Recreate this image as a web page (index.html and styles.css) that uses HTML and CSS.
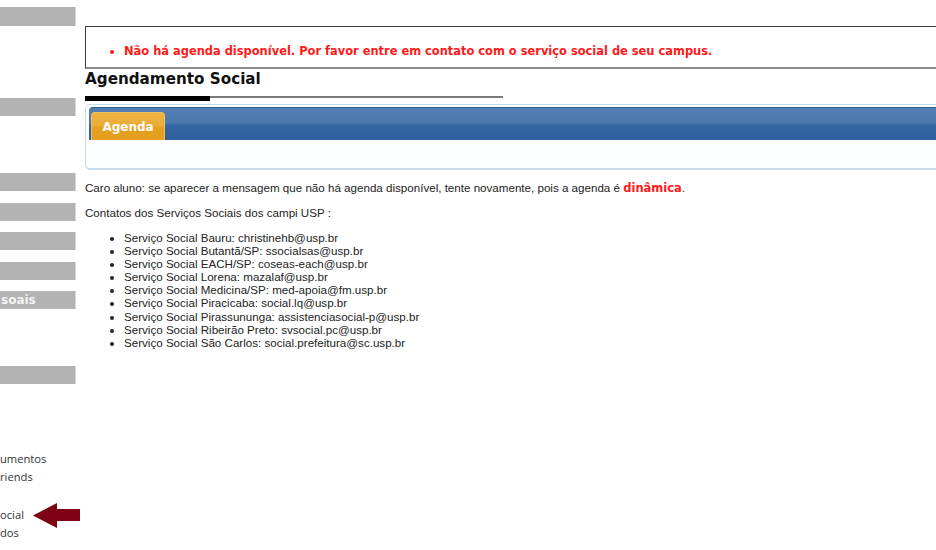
FILE: index.html
```html
<!DOCTYPE html>
<html lang="pt-BR">
<head>
<meta charset="utf-8">
<title>Agendamento Social</title>
<link rel="stylesheet" href="styles.css">
</head>
<body>
<div class="page">
  <aside class="sidebar">
    <div class="bar b1"></div>
    <div class="bar b2"></div>
    <div class="bar b3"></div>
    <div class="bar b4"></div>
    <div class="bar b5"></div>
    <div class="bar b6"></div>
    <div class="bar b7"><span class="bar-label">soais</span></div>
    <div class="bar b8"></div>
    <div class="links">
      <div class="link">umentos</div>
      <div class="link">riends</div>
      <div class="link l3">ocial</div>
      <div class="link">dos</div>
    </div>
  </aside>
  <main class="main">
    <div class="alert">
      <ul>
        <li>Não há agenda disponível. Por favor entre em contato com o serviço social de seu campus.</li>
      </ul>
    </div>
    <h1 class="title">Agendamento Social</h1>
    <div class="title-rule"><span class="title-rule-mark"></span></div>
    <div class="tabs">
      <div class="tabbar"><span class="tab">Agenda</span></div>
      <div class="tabbody"></div>
    </div>
    <p class="text">Caro aluno: se aparecer a mensagem que não há agenda disponível, tente novamente, pois a agenda é <span class="hot">dinâmica</span>.</p>
    <p class="text">Contatos dos Serviços Sociais dos campi USP :</p>
    <ul class="contacts">
      <li>Serviço Social Bauru: christinehb@usp.br</li>
      <li>Serviço Social Butantã/SP: ssocialsas@usp.br</li>
      <li>Serviço Social EACH/SP: coseas-each@usp.br</li>
      <li>Serviço Social Lorena: mazalaf@usp.br</li>
      <li>Serviço Social Medicina/SP: med-apoia@fm.usp.br</li>
      <li>Serviço Social Piracicaba: social.lq@usp.br</li>
      <li>Serviço Social Pirassununga: assistenciasocial-p@usp.br</li>
      <li>Serviço Social Ribeirão Preto: svsocial.pc@usp.br</li>
      <li>Serviço Social São Carlos: social.prefeitura@sc.usp.br</li>
    </ul>
  </main>
  <svg class="arrow" width="48" height="25" viewBox="0 0 48 25" aria-hidden="true">
    <polygon points="0,12.5 24,0 24,6 47,6 47,18 24,18 24,25" fill="#7d0014"/>
  </svg>
</div>
</body>
</html>
```
FILE: styles.css
```css
html, body {
  margin: 0;
  padding: 0;
  background: #ffffff;
  overflow: hidden;
}

.page {
  position: relative;
  display: flex;
  gap: 9px;
  width: 936px;
  height: 550px;
  overflow: hidden;
}

/* ---------- sidebar ---------- */
.sidebar {
  flex: 0 0 76px;
  width: 76px;
  overflow: hidden;
  display: flex;
  flex-direction: column;
}

.bar {
  height: 18px;
  background: #b3b3b3;
  border-right: 1px solid #d9d9d9;
  flex: none;
  white-space: nowrap;
}
.b1 { margin-top: 7px; height: 19px; }
.b2 { margin-top: 72px; }
.b3 { margin-top: 57px; }
.b4 { margin-top: 12px; }
.b5 { margin-top: 11px; }
.b6 { margin-top: 12px; }
.b7 { margin-top: 11px; }
.b8 { margin-top: 57px; }

.bar-label {
  display: block;
  padding-left: 1px;
  font: bold 12px/18px "DejaVu Sans", Verdana, sans-serif;
  color: #f4f4f4;
}

.links {
  margin-top: 66px;
  font: 11.2px/18px "Open Sans", "DejaVu Sans", sans-serif;
  color: #333333;
  white-space: nowrap;
}
.link { height: 18px; }
.l3 { margin-top: 20px; }

.arrow {
  position: absolute;
  left: 33px;
  top: 503px;
}

/* ---------- main ---------- */
.main {
  flex: 0 0 900px;
  width: 900px;
  font-family: "Liberation Sans", Arial, sans-serif;
  color: #222222;
}

.alert {
  margin-top: 26px;
  border-top: 1px solid #3a3a3a;
  border-left: 1px solid #3a3a3a;
  border-bottom: 2px solid #8a8a8a;
}
.alert ul {
  margin: 16px 0 8px;
  padding-left: 38px;
  font: bold 11.45px/16px "DejaVu Sans", Verdana, sans-serif;
  color: #ff1a1a;
}

.title {
  margin: 1px 0 0;
  font: bold 15.2px/18px "DejaVu Sans", Verdana, sans-serif;
  color: #111111;
}

.title-rule {
  margin-top: 8px;
  width: 418px;
  height: 2px;
  background: #7a7a7a;
}
.title-rule-mark {
  display: block;
  width: 125px;
  height: 5px;
  background: #000000;
}

.tabs {
  margin-top: 6px;
  border: 1px solid #c9dcec;
  border-bottom-width: 2px;
  border-radius: 5px 0 0 5px;
  padding: 2px 0 0 3px;
  background: #fcfdfe;
}

.tabbar {
  height: 32px;
  border-top: 1px solid #2b5a94;
  border-radius: 4px 0 0 0;
  background: linear-gradient(#557fb3 0%, #4c78ad 45%, #3465a2 55%, #2e5f9e 100%);
  display: flex;
  align-items: flex-end;
  padding-left: 2px;
}

.tab {
  width: 72px;
  height: 27px;
  border: 1px solid #efc15a;
  border-bottom: none;
  border-radius: 4px 4px 0 0;
  background: linear-gradient(#efb445 0%, #ecab35 45%, #e6a01f 55%, #e49d1c 100%);
  color: #ffffff;
  font: bold 12px/28px "DejaVu Sans", Verdana, sans-serif;
  text-align: center;
}

.tabbody {
  height: 28px;
}

.text {
  margin: 11px 0 0;
  font-size: 11.6px;
  line-height: 14px;
}
.hot {
  font: bold 11.5px/14px "DejaVu Sans", Verdana, sans-serif;
  color: #ff1a1a;
}

.contacts {
  margin: 11px 0 0;
  padding-left: 39px;
  font-size: 11.6px;
  line-height: 13.1px;
}
```
